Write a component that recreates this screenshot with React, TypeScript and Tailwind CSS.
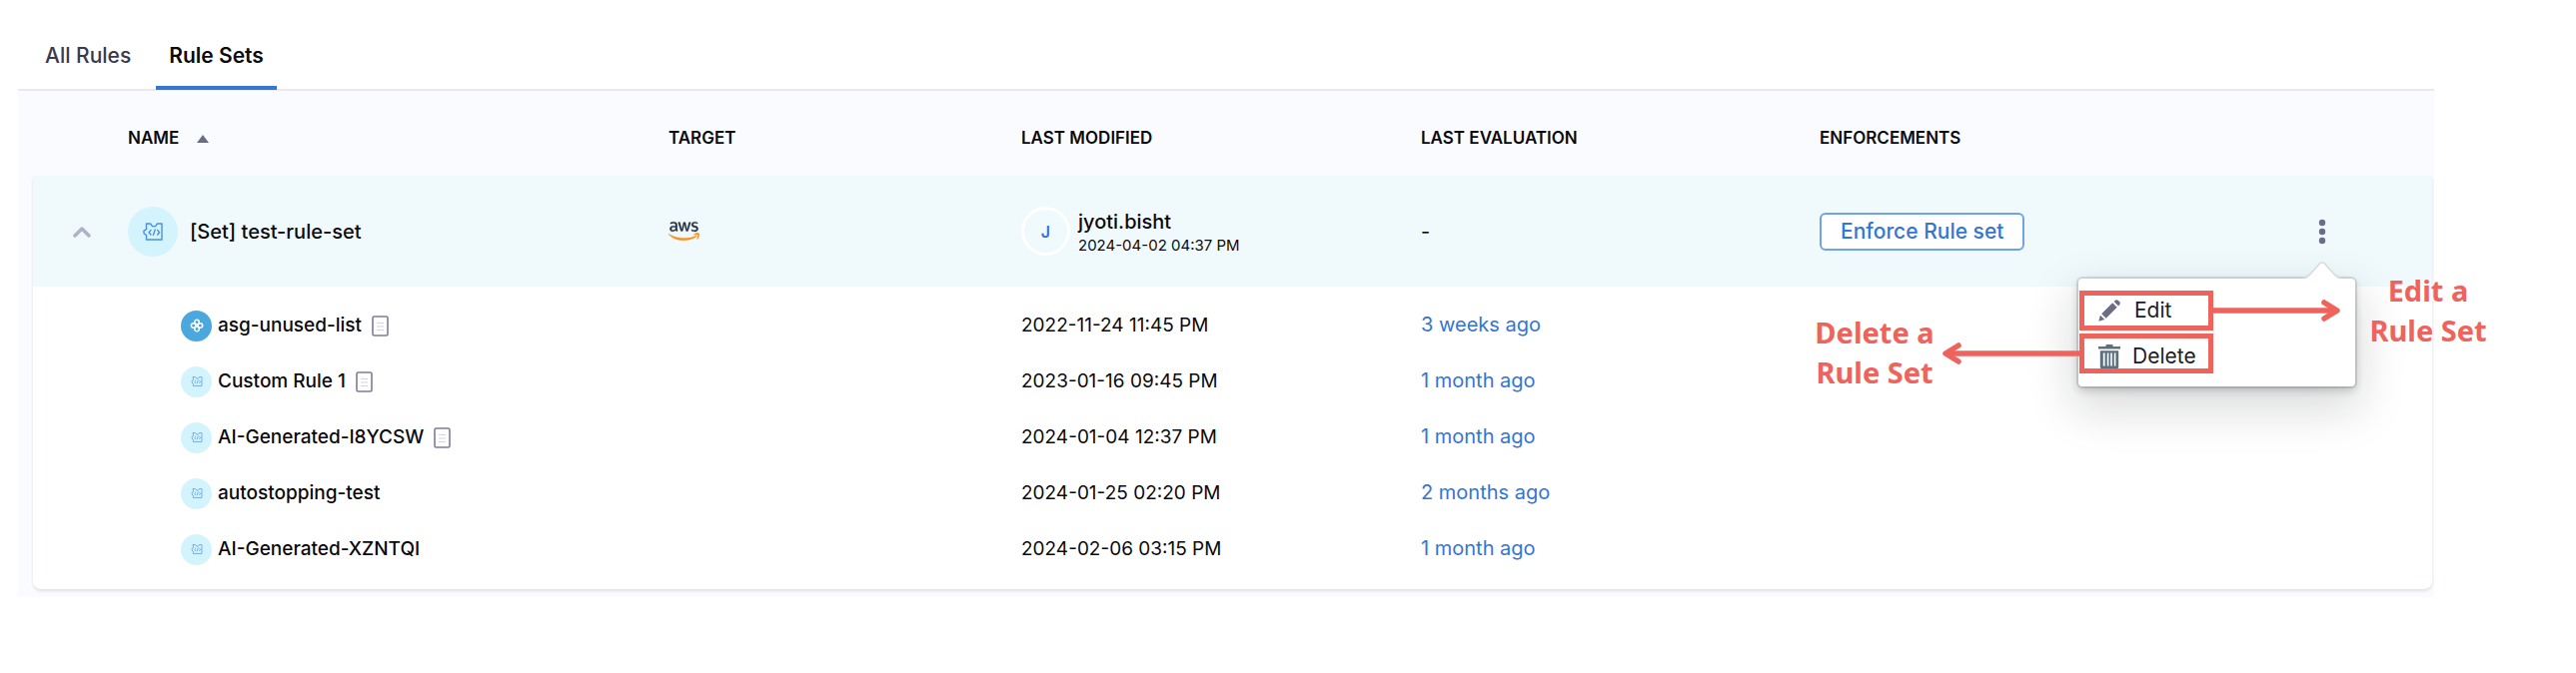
import type { ReactNode } from "react";
import { FaAws } from "react-icons/fa";

const GRID =
  "grid grid-cols-[95px_541fr_353fr_400fr_399fr_499fr_114fr] items-center";

type Rule = {
  name: string;
  modified: string;
  evaluated: string;
  builtIn?: boolean;
  doc?: boolean;
};

const rules: Rule[] = [
  { name: "asg-unused-list", modified: "2022-11-24 11:45 PM", evaluated: "3 weeks ago", builtIn: true, doc: true },
  { name: "Custom Rule 1", modified: "2023-01-16 09:45 PM", evaluated: "1 month ago", doc: true },
  { name: "AI-Generated-I8YCSW", modified: "2024-01-04 12:37 PM", evaluated: "1 month ago", doc: true },
  { name: "autostopping-test", modified: "2024-01-25 02:20 PM", evaluated: "2 months ago" },
  { name: "AI-Generated-XZNTQI", modified: "2024-02-06 03:15 PM", evaluated: "1 month ago" },
];

function RuleSetIcon({ className }: { className: string }) {
  return (
    <svg viewBox="0 0 20 18" className={className} fill="none" stroke="currentColor" strokeWidth="1.4" strokeLinejoin="round" strokeLinecap="round" aria-hidden="true">
      <path d="M3.5 1H7.5L9.5 3.6H12.5L14.5 1H19V17H3.5V12.6L1 10.8V8.2L3.5 6.6Z" />
      <path d="M8 7.4L6 9.7L8 12M14.6 7.4L16.6 9.7L14.6 12M12.2 7L10.4 12.4" />
    </svg>
  );
}

function CloverIcon() {
  return (
    <svg viewBox="0 0 14 14" className="size-3.5" fill="none" stroke="white" strokeWidth="1.5" aria-hidden="true">
      <circle cx="7" cy="3.6" r="2.3" />
      <circle cx="10.4" cy="7" r="2.3" />
      <circle cx="7" cy="10.4" r="2.3" />
      <circle cx="3.6" cy="7" r="2.3" />
    </svg>
  );
}

function DocIcon() {
  return (
    <svg viewBox="0 0 17 21" className="ml-1 h-[21px] w-[17px]" fill="none" aria-hidden="true">
      <rect x="1" y="1" width="15" height="19" rx="1.5" stroke="#7c7d99" strokeWidth="1.6" />
      <path d="M5 7.5H12M5 11H12M5 14.5H12" stroke="#d3d3e0" strokeWidth="1.2" />
    </svg>
  );
}

function PencilIcon() {
  return (
    <svg viewBox="0 0 16 16" className="size-[22px]" fill="#6b6d85" aria-hidden="true">
      <path d="M0.2 15.8L1.4 11.4L4.6 14.6ZM2.3 10.4L10.3 2.4L13.6 5.7L5.6 13.7ZM11.3 1.4L12.3 0.5C12.9 0 13.7 0 14.3 0.5L15.5 1.7C16 2.3 16 3.1 15.5 3.7L14.6 4.7Z" />
    </svg>
  );
}

function TrashIcon() {
  return (
    <svg viewBox="0 0 22 24" className="h-6 w-[22px]" fill="#5c7080" aria-hidden="true">
      <path d="M0 2H7.4V1.2C7.4 0.5 7.9 0 8.6 0H13.4C14.1 0 14.6 0.5 14.6 1.2V2H22V4.6H0Z" />
      <path fillRule="evenodd" d="M1.8 6.2H20.2V22.4C20.2 23.3 19.5 24 18.6 24H3.4C2.5 24 1.8 23.3 1.8 22.4ZM4.8 8.6V21.4H6.6V8.6ZM8.8 8.6V21.4H10.4V8.6ZM12.2 8.6V21.4H13.8V8.6ZM15.8 8.6V21.4H17.4V8.6Z" />
    </svg>
  );
}

function AwsLogo() {
  return (
    <span role="img" aria-label="aws">
      <svg className="absolute size-0" aria-hidden="true">
        <linearGradient id="aws-tones" x1="0" y1="0" x2="0" y2="1">
          <stop offset="0.61" stopColor="#252f3e" />
          <stop offset="0.61" stopColor="#f6921e" />
        </linearGradient>
      </svg>
      <FaAws fill="url(#aws-tones)" stroke="url(#aws-tones)" strokeWidth="6" className="h-[25px] w-[31px]" />
    </span>
  );
}

function Note({ className, children }: { className: string; children: ReactNode }) {
  return (
    <p className={`absolute w-32 text-center font-['Noto_Sans','Open_Sans',sans-serif] text-[29px]/10 font-bold text-[#ef635d] ${className}`}>
      {children}
    </p>
  );
}

function Arrow({ length, className }: { length: number; className: string }) {
  const tip = length - 3;
  return (
    <svg width={length} height="22" viewBox={`0 0 ${length} 22`} className={className} fill="none" stroke="#ef635d" strokeWidth="5.5" aria-hidden="true">
      <path d={`M0 11H${tip}`} />
      <path d={`M${tip - 13} 3L${tip} 11L${tip - 13} 19`} strokeLinecap="round" strokeLinejoin="round" />
    </svg>
  );
}

function ActionsMenu() {
  return (
    <div className="absolute top-full right-[-29px] z-10 mt-[34px] h-[108px] w-[277px] rounded bg-white shadow-[0_0_0_2px_rgba(16,22,26,0.12),0_4px_8px_rgba(16,22,26,0.2),0_18px_46px_6px_rgba(16,22,26,0.15)]">
      <svg viewBox="0 0 38 19" className="absolute top-[-18px] right-[14px] h-[19px] w-[38px]" aria-hidden="true">
        <path d="M0 18C4 18 5 16 7 14L16.500 3C18 1.300 20 1.300 21.500 3L31 14C33 16 34 18 38 18V19H0Z" fill="white" />
        <path d="M0 17C4 17 5 15.500 7 13.500L16.500 3C18 1.300 20 1.300 21.500 3L31 13.500C33 15.500 34 17 38 17" fill="none" stroke="#d3dcdf" strokeWidth="1.500" />
      </svg>
      <div role="menu" className="flex flex-col items-start gap-[3px] pt-3 pl-px">
        <button type="button" role="menuitem" className="flex h-10 w-[134px] items-center gap-3.5 border-[5px] border-[#ef635d] pl-3.5 text-[21px] leading-none text-[#1c1c28]">
          <PencilIcon />
          Edit
        </button>
        <button type="button" role="menuitem" className="flex h-10 w-[134px] items-end gap-3 border-[5px] border-[#ef635d] pl-3.5 text-[21px]/6 text-[#1c1c28]">
          <TrashIcon />
          Delete
        </button>
      </div>
      <Arrow length={127} className="absolute top-[21px] left-[135px]" />
      <Arrow length={137} className="absolute top-16 right-[276px] rotate-180" />
      <Note className="top-[-8px] left-[286px]">
        Edit a
        <br />
        Rule Set
      </Note>
      <Note className="top-[34px] right-[417px]">
        Delete a
        <br />
        Rule Set
      </Note>
    </div>
  );
}

export default function App() {
  return (
    <div className="pt-6 pr-[142px] pb-[76px] pl-[18px] font-[Inter,'Liberation_Sans',sans-serif] text-[#0b0b0d]">
      <main className="bg-[#fafbff] pb-2">
        <div role="tablist" className="flex h-[67px] items-stretch border-b-2 border-[#e9e9f0] bg-white pl-3.5 text-[21px] font-medium">
          <button type="button" role="tab" aria-selected="false" className="px-[13px] pt-0.5 pb-1 text-[#3a3a4c]">
            All Rules
          </button>
          <button type="button" role="tab" aria-selected="true" className="-mb-px ml-3 rounded-t-sm border-b-4 border-[#3575d3] px-[13px] pt-0.5 font-semibold">
            Rule Sets
          </button>
        </div>

        <table className="mr-0.5 ml-[15px] block">
          <thead className="block">
            <tr className={`${GRID} h-[85px] pt-2.5 text-left text-[17px]`}>
              <th aria-label="Expand" />
              <th className="font-semibold" aria-sort="ascending">
                <span className="flex items-center gap-[18px]">
                  NAME
                  <svg viewBox="0 0 12 8" className="h-2 w-3" fill="#6b6d85" aria-hidden="true">
                    <path d="M6 0L12 8H0Z" />
                  </svg>
                </span>
              </th>
              <th className="font-semibold">TARGET</th>
              <th className="font-semibold">LAST MODIFIED</th>
              <th className="font-semibold">LAST EVALUATION</th>
              <th className="font-semibold">ENFORCEMENTS</th>
              <th aria-label="Actions" />
            </tr>
          </thead>
          <tbody className="block rounded-b-lg bg-white pb-3 shadow-[0_2px_3px_rgba(40,41,61,0.12)]">
            <tr className={`${GRID} mb-[11px] h-[111px] bg-[#f0fafd]`}>
              <td>
                <button type="button" aria-label="Collapse" className="ml-10 block">
                  <svg viewBox="0 0 18 12" className="h-3 w-[18px]" fill="none" stroke="#b0b1c4" strokeWidth="3.500" strokeLinecap="round" strokeLinejoin="round" aria-hidden="true">
                    <path d="M2 10L9 3L16 10" />
                  </svg>
                </button>
              </td>
              <td>
                <div className="flex items-center gap-3 text-xl font-medium">
                  <span className="flex size-[50px] items-center justify-center rounded-full bg-[#d3f3fd] text-[#4a90e2]">
                    <RuleSetIcon className="h-[18px] w-5" />
                  </span>
                  [Set] test-rule-set
                </div>
              </td>
              <td>
                <AwsLogo />
              </td>
              <td>
                <div className="flex items-center gap-2">
                  <span className="flex size-[49px] items-center justify-center rounded-full border-[3px] border-white text-base font-semibold text-[#3575d3]">
                    J
                  </span>
                  <div className="pt-1">
                    <div className="text-xl/6 font-medium">jyoti.bisht</div>
                    <div className="text-[15px]/6">2024-04-02 04:37 PM</div>
                  </div>
                </div>
              </td>
              <td className="text-xl">-</td>
              <td>
                <button type="button" className="block h-[38px] rounded-md border-2 border-[#6ea3e8] bg-white px-[19px] text-[21px] leading-none font-medium text-[#3575d3]">
                  Enforce Rule set
                </button>
              </td>
              <td>
                <div className="relative w-2">
                  <button type="button" aria-label="Actions" aria-haspopup="menu" aria-expanded="true" className="block">
                    <svg viewBox="0 0 8 26" className="h-[26px] w-2" fill="#6b6d85" aria-hidden="true">
                      <circle cx="4" cy="4" r="3.200" />
                      <circle cx="4" cy="13" r="3.200" />
                      <circle cx="4" cy="22" r="3.200" />
                    </svg>
                  </button>
                  <ActionsMenu />
                </div>
              </td>
            </tr>
            {rules.map((rule) => (
              <tr key={rule.name} className={`${GRID} h-14 text-[19px]`}>
                <td />
                <td>
                  <div className="flex items-center gap-1.5 pl-[53px] font-medium">
                    {rule.builtIn ? (
                      <span className="flex size-[31px] items-center justify-center rounded-full bg-[#4aa8de]">
                        <CloverIcon />
                      </span>
                    ) : (
                      <span className="flex size-[31px] items-center justify-center rounded-full bg-[#d3f3fd] text-[#5d9ce6]">
                        <RuleSetIcon className="h-2.5 w-3" />
                      </span>
                    )}
                    {rule.name}
                    {rule.doc && <DocIcon />}
                  </div>
                </td>
                <td />
                <td>{rule.modified}</td>
                <td>
                  <a href="#evaluation" className="text-xl text-[#3575d3]">
                    {rule.evaluated}
                  </a>
                </td>
                <td />
                <td />
              </tr>
            ))}
          </tbody>
        </table>
      </main>
    </div>
  );
}
